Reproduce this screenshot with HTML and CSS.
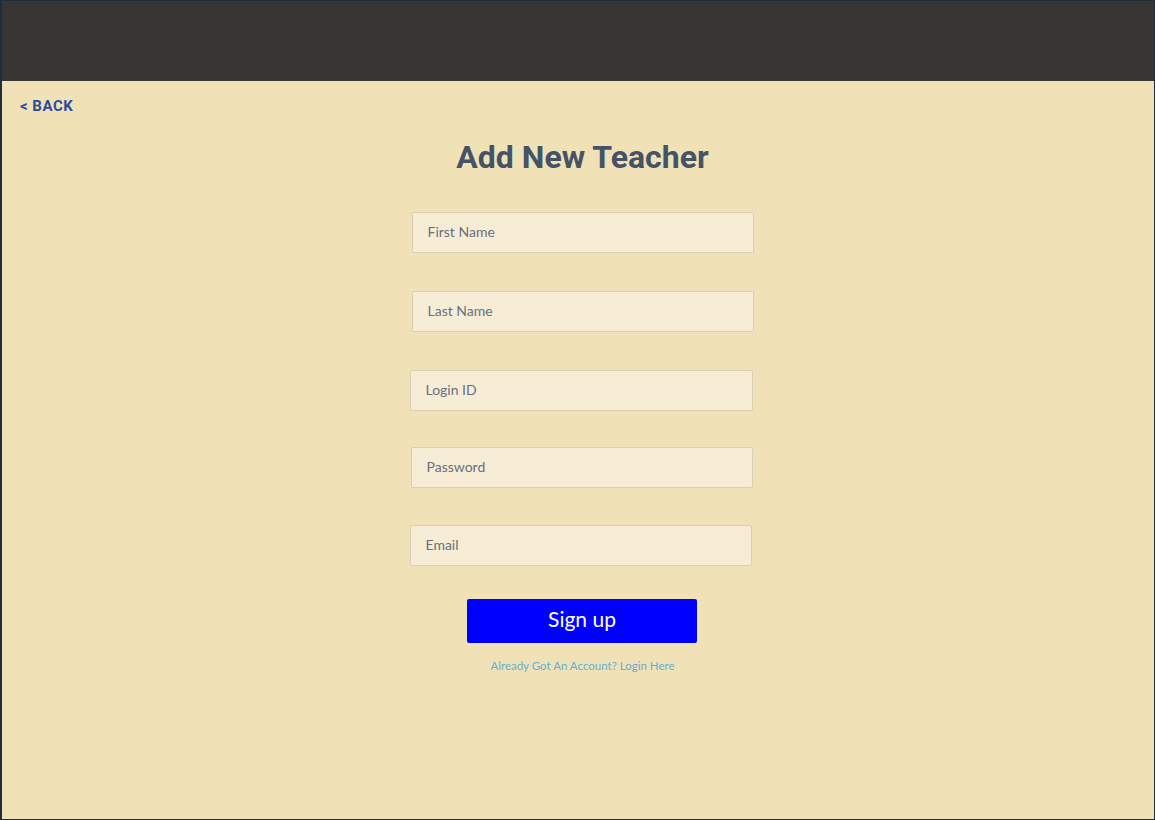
FILE: index.html
```html
<!DOCTYPE html>
<html lang="en">
<head>
<meta charset="utf-8">
<title>Add New Teacher</title>
<link rel="stylesheet" href="styles.css">
</head>
<body>
<div class="frame">
  <header class="topbar"></header>
  <main class="content">
    <a class="back" href="#">&lt; BACK</a>
    <form class="form">
      <h1 class="title">Add New Teacher</h1>
      <input class="field field-first" type="text" placeholder="First Name">
      <input class="field field-last" type="text" placeholder="Last Name">
      <input class="field field-login" type="text" placeholder="Login ID">
      <input class="field field-password" type="password" placeholder="Password">
      <input class="field field-email" type="email" placeholder="Email">
      <button class="signup" type="button">Sign up</button>
      <a class="login" href="#">Already Got An Account? Login Here</a>
    </form>
  </main>
</div>
</body>
</html>
```

FILE: styles.css
```css
* { box-sizing: border-box; }

html, body {
  margin: 0;
  padding: 0;
  height: 100%;
}

body {
  font-family: "Lato", "Liberation Sans", sans-serif;
  background: #1d2b3c;
}

.frame {
  width: 1155px;
  height: 820px;
  border-top: 1px solid #1f2d3e;
  border-left: 2px solid #1f2d3e;
  border-right: 1px solid #1f2d3e;
  border-bottom: 1px solid #1f2d3e;
  display: flex;
  flex-direction: column;
  background: #f0e2b6;
}

.topbar {
  height: 80px;
  flex: none;
  background: #383633;
}

.content {
  flex: 1;
  padding: 16px 0 0 18px;
}

.back {
  display: block;
  width: max-content;
  font-family: "Roboto", "Liberation Sans", sans-serif;
  font-weight: 700;
  font-size: 15px;
  line-height: 18px;
  letter-spacing: 0.5px;
  color: #2e4b9b;
  text-decoration: none;
}

.form {
  display: flex;
  flex-direction: column;
  align-items: center;
  margin: 0;
  padding: 0 9px 0 0;
}

.title {
  margin: 23px 0 36px 0;
  font-family: "Roboto", "Liberation Sans", sans-serif;
  font-weight: 700;
  font-size: 32px;
  line-height: 38px;
  color: #465366;
}

.field {
  display: block;
  width: 342px;
  height: 41px;
  margin: 0 0 38px 0;
  padding: 0 16px 3px 15px;
  border: 1px solid #d8d0b3;
  border-radius: 2px;
  background: #f7edd7;
  font-family: "Lato", "Liberation Sans", sans-serif;
  font-size: 14px;
  color: #5f6b78;
  outline: none;
}

.field::placeholder {
  color: #66717d;
  opacity: 1;
}

.field-login { margin-bottom: 36px; margin-right: 3px; width: 343px; }
.field-password { margin-bottom: 37px; margin-right: 2px; }
.field-email { margin-bottom: 33px; margin-right: 4px; }

.signup {
  width: 230px;
  height: 44px;
  margin-right: 1px;
  border: none;
  border-radius: 2px;
  background: #0000ff;
  color: #ffffff;
  font-family: "Lato", "Liberation Sans", sans-serif;
  font-size: 21px;
  cursor: pointer;
  padding: 0 0 5px 0;
}

.login {
  margin-top: 16px;
  font-family: "Lato", "Liberation Sans", sans-serif;
  font-size: 11.5px;
  line-height: 13px;
  color: #62b0d3;
  text-decoration: none;
}
```
